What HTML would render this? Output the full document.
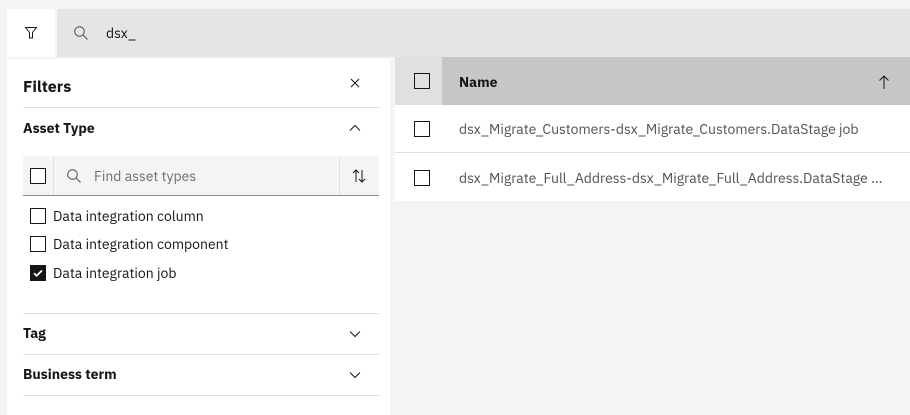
<!DOCTYPE html>
<html><head><meta charset="utf-8"><style>
*{margin:0;padding:0;box-sizing:border-box}
body{width:910px;height:415px;background:#f4f4f4;font-family:"IBM Plex Sans","Liberation Sans",sans-serif;color:#161616;position:relative;overflow:hidden;font-size:14px}
.a{position:absolute}
.cb{position:absolute;width:16px;height:16px;border:1px solid #161616;background:#fff}
.t{position:absolute;white-space:nowrap}
.hr{position:absolute;height:1px;background:#e0e0e0}
</style></head><body>
<div class="a" style="left:7px;top:9px;width:48px;height:48px;background:#fff"></div>
<svg class="a" style="left:24px;top:26px" width="14" height="14" viewBox="0 0 14 14"><path d="M1.5 1.5h11l-4 5v5.5h-3V6.5z" fill="none" stroke="#161616" stroke-width="1"/></svg>
<div class="a" style="left:57px;top:9px;width:853px;height:48px;background:#e5e5e5"></div>
<svg class="a" style="left:73px;top:25px" width="16" height="16" viewBox="0 0 16 16"><circle cx="6.5" cy="6.5" r="4.8" fill="none" stroke="#525252" stroke-width="1"/><path d="M10 10l4.5 4.5" stroke="#525252" stroke-width="1"/></svg>
<div class="t" style="left:106px;top:24px;font-size:14px">dsx_</div>

<div class="a" style="left:7px;top:59px;width:383px;height:356px;background:#fff"></div>
<div class="t" style="left:23px;top:77px;font-size:16px;font-weight:700">Filters</div>
<svg class="a" style="left:350px;top:78px" width="10" height="10" viewBox="0 0 10 10"><path d="M1 1l8 8M9 1l-8 8" stroke="#161616" stroke-width="1"/></svg>
<div class="hr" style="left:23px;top:107px;width:356px"></div>
<div class="t" style="left:23px;top:119px;font-weight:700">Asset Type</div>
<svg class="a" style="left:349px;top:124px" width="12" height="8" viewBox="0 0 12 8"><path d="M1 6.5l5-5 5 5" fill="none" stroke="#161616" stroke-width="1"/></svg>
<div class="a" style="left:23px;top:156px;width:356px;height:40px;background:#f4f4f4;border-bottom:1px solid #8d8d8d"></div>
<div class="a" style="left:53px;top:156px;width:1px;height:39px;background:#e0e0e0"></div>
<div class="a" style="left:339px;top:156px;width:1px;height:39px;background:#e0e0e0"></div>
<div class="cb" style="left:30px;top:168px"></div>
<svg class="a" style="left:66px;top:168px" width="16" height="16" viewBox="0 0 16 16"><circle cx="6.5" cy="6.5" r="4.8" fill="none" stroke="#525252" stroke-width="1"/><path d="M10 10l4.5 4.5" stroke="#525252" stroke-width="1"/></svg>
<div class="t" style="left:94px;top:167px;color:#6f6f6f">Find asset types</div>
<svg class="a" style="left:351px;top:168px" width="16" height="16" viewBox="0 0 16 16"><path d="M5 14V2M2 5l3-3 3 3M11 2v12M8 11l3 3 3-3" fill="none" stroke="#161616" stroke-width="1"/></svg>
<div class="cb" style="left:30px;top:208px"></div>
<div class="t" style="left:53px;top:207px">Data integration column</div>
<div class="cb" style="left:30px;top:236px"></div>
<div class="t" style="left:53px;top:235px">Data integration component</div>
<div class="cb" style="left:30px;top:265px;background:#161616"></div>
<svg class="a" style="left:30px;top:265px" width="16" height="16" viewBox="0 0 16 16"><path d="M4 8.3l2.6 2.5L12 5.5" fill="none" stroke="#fff" stroke-width="1.8"/></svg>
<div class="t" style="left:53px;top:264px">Data integration job</div>
<div class="hr" style="left:23px;top:313px;width:356px"></div>
<div class="t" style="left:23px;top:324px;font-weight:700">Tag</div>
<svg class="a" style="left:349px;top:330px" width="12" height="8" viewBox="0 0 12 8"><path d="M1 1.5l5 5 5-5" fill="none" stroke="#161616" stroke-width="1"/></svg>
<div class="hr" style="left:23px;top:354px;width:356px"></div>
<div class="t" style="left:23px;top:365px;font-weight:700">Business term</div>
<svg class="a" style="left:349px;top:371px" width="12" height="8" viewBox="0 0 12 8"><path d="M1 1.5l5 5 5-5" fill="none" stroke="#161616" stroke-width="1"/></svg>
<div class="hr" style="left:23px;top:395px;width:356px"></div>

<div class="a" style="left:395px;top:57px;width:47px;height:48px;background:#e0e0e0"></div>
<div class="a" style="left:442px;top:57px;width:468px;height:48px;background:#c6c6c6"></div>
<div class="cb" style="left:414px;top:73px;background:transparent"></div>
<div class="t" style="left:459px;top:73px;font-weight:700">Name</div>
<svg class="a" style="left:878px;top:74px" width="12" height="16" viewBox="0 0 12 16"><path d="M6 15V2M1.5 6.5L6 2l4.5 4.5" fill="none" stroke="#161616" stroke-width="1"/></svg>
<div class="a" style="left:395px;top:105px;width:515px;height:96px;background:#fff"></div>
<div class="hr" style="left:395px;top:152px;width:515px"></div>
<div class="cb" style="left:414px;top:121px"></div>
<div class="t" style="left:459px;top:120px;color:#525252">dsx_Migrate_Customers-dsx_Migrate_Customers.DataStage job</div>
<div class="cb" style="left:414px;top:170px"></div>
<div class="t" style="left:459px;top:169px;color:#525252">dsx_Migrate_Full_Address-dsx_Migrate_Full_Address.DataStage ...</div>
</body></html>
